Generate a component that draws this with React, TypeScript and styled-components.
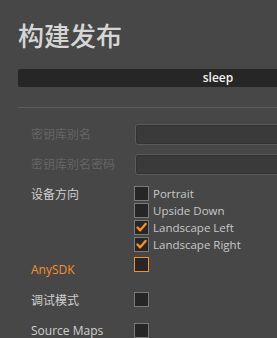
import React from "react";
import styled, { createGlobalStyle } from "styled-components";

const GlobalStyle = createGlobalStyle`
  html, body {
    margin: 0;
    padding: 0;
    background: #474747;
    overflow: hidden;
  }
  body {
    font-family: "Open Sans", "Noto Sans CJK SC", sans-serif;
  }
`;

interface CheckOption {
  label: string;
  checked: boolean;
}

const orientations: CheckOption[] = [
  { label: "Portrait", checked: false },
  { label: "Upside Down", checked: false },
  { label: "Landscape Left", checked: true },
  { label: "Landscape Right", checked: true },
];

export default function App() {
  return (
    <>
      <GlobalStyle />
      <Panel>
        <Title>构建发布</Title>
        <StatusBar>sleep</StatusBar>
        <Divider />

        <Form>
          <Row $top={0} $align="center">
            <Label $disabled>密钥库别名</Label>
            <TextInput disabled />
          </Row>
          <Row $top={9} $align="center">
            <Label $disabled>密钥库别名密码</Label>
            <TextInput disabled />
          </Row>
          <Row $top={11} $align="start">
            <Label $offset={1}>设备方向</Label>
            <CheckList>
              {orientations.map((o) => (
                <CheckItem key={o.label}>
                  <CheckBox checked={o.checked} />
                  <CheckText>{o.label}</CheckText>
                </CheckItem>
              ))}
            </CheckList>
          </Row>
          <Row $top={5} $align="start">
            <Label $accent $offset={5}>
              AnySDK
            </Label>
            <CheckBox checked={false} accent />
          </Row>
          <Row $top={15} $align="start">
            <Label $offset={1}>调试模式</Label>
            <CheckBox checked={false} />
          </Row>
          <Row $top={15} $align="start">
            <Label>Source Maps</Label>
            <CheckBox checked={false} />
          </Row>
        </Form>
      </Panel>
    </>
  );
}

function CheckBox(props: { checked: boolean; accent?: boolean }) {
  return (
    <Box $accent={props.accent}>
      {props.checked && (
        <svg width="13" height="13" viewBox="0 0 13 13">
          <path
            d="M2.5 6.5 L5.2 9.3 L10.6 3"
            fill="none"
            stroke="#f7902a"
            strokeWidth="2.4"
            strokeLinecap="round"
            strokeLinejoin="round"
          />
        </svg>
      )}
    </Box>
  );
}

const Panel = styled.div`
  width: 400px;
  padding: 20px 0 0 18px;
`;

const Title = styled.h1`
  margin: 0;
  font-family: "Noto Sans CJK SC", sans-serif;
  font-size: 26px;
  font-weight: 500;
  line-height: 30px;
  color: #d6d6d6;
`;

const StatusBar = styled.div`
  margin-top: 19px;
  height: 18px;
  border-radius: 2px;
  background: #262626;
  color: #f2f2f2;
  font-size: 12px;
  font-weight: 600;
  line-height: 17px;
  text-align: center;
`;

const Divider = styled.div`
  margin-top: 20px;
  height: 1px;
  background: #5f5f5f;
`;

const Form = styled.div`
  padding: 16px 0 0 13px;
  display: flex;
  flex-direction: column;
`;

const Row = styled.div<{ $top: number; $align: "start" | "center" }>`
  display: grid;
  grid-template-columns: 103px 1fr;
  align-items: ${(p) => p.$align};
  margin-top: ${(p) => p.$top}px;
`;

const Label = styled.div<{ $disabled?: boolean; $accent?: boolean; $offset?: number }>`
  font-family: "Open Sans", "Noto Sans CJK SC", sans-serif;
  font-size: 12px;
  line-height: 15px;
  height: 15px;
  padding-top: ${(p) => p.$offset ?? 0}px;
  color: ${(p) => (p.$accent ? "#f7902a" : p.$disabled ? "#656565" : "#cfcfcf")};
  white-space: nowrap;
`;

const TextInput = styled.input`
  box-sizing: border-box;
  margin-left: 1px;
  height: 21px;
  border: 1px solid #5a5a5a;
  border-radius: 3px;
  background: #3a3a3a;
  box-shadow: inset 0 0 0 1px #333;
`;

const CheckList = styled.div`
  display: flex;
  flex-direction: column;
  gap: 2px;
`;

const CheckItem = styled.label`
  display: flex;
  align-items: center;
  gap: 4px;
  height: 15px;
`;

const CheckText = styled.span`
  font-size: 11.5px;
  line-height: 15px;
  color: #c8c8c8;
  white-space: nowrap;
`;

const Box = styled.span<{ $accent?: boolean }>`
  box-sizing: border-box;
  width: 15px;
  height: 15px;
  display: flex;
  align-items: center;
  justify-content: center;
  background: #262626;
  border: 1px solid ${(p) => (p.$accent ? "#f7902a" : "#7a7a7a")};
`;
